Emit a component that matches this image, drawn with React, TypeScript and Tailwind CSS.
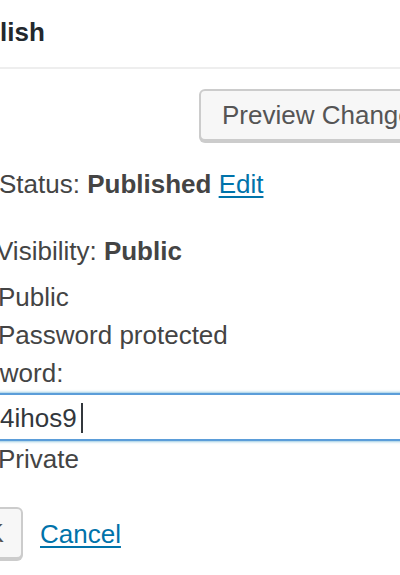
export default function App() {
  return (
    <div
      className="relative w-[400px] h-[575px] overflow-hidden bg-white text-[#444] text-[26px]"
      style={{ fontFamily: '"Liberation Sans", Arial, sans-serif' }}
    >
      {/* header */}
      <div className="h-[69px] border-b-2 border-[#eeeeee] ml-[-49px] pt-[18px]">
        <h2 className="text-[26px] leading-[28px] font-bold text-[#23282d] whitespace-nowrap">Publish</h2>
      </div>

      {/* preview button */}
      <div className="flex pt-[20px] pl-[199px] h-[76px]">
        <button className="h-[52px] w-[260px] shrink-0 rounded-[6px] border-2 border-[#cccccc] bg-[#f7f7f7] shadow-[0_2px_0_#cccccc] text-left pl-[21px] pt-[1px] text-[#555] text-[26px] whitespace-nowrap">
          Preview Changes
        </button>
      </div>

      {/* status */}
      <div className="mt-[24px] leading-[30px] whitespace-nowrap ml-[-1px]">
        Status: <b className="text-[#444]">Published</b>{" "}
        <a href="#" className="text-[#0073aa] underline underline-offset-[3px]">Edit</a>
      </div>

      {/* visibility */}
      <div className="mt-[37px] leading-[30px] whitespace-nowrap ml-[-4px]">
        Visibility: <b>Public</b>
      </div>

      <div className="mt-[12px] leading-[38px] whitespace-nowrap">
        <div className="flex items-center ml-[-34px] gap-[8px]">
          <span className="w-[24px] h-[24px] rounded-full border-2 border-[#b4b9be] shrink-0" />
          <span>Public</span>
        </div>
        <div className="flex items-center ml-[-34px] gap-[8px]">
          <span className="w-[24px] h-[24px] rounded-full border-2 border-[#b4b9be] shrink-0" />
          <span>Password protected</span>
        </div>
        <div className="ml-[-58px]">Password:</div>
      </div>

      {/* password input */}
      <div className="mt-[1px] ml-[-40px] w-[480px] h-[48px] border-2 border-[#5b9dd9] shadow-[0_0_3px_rgba(30,140,190,0.8)] bg-white flex items-center pl-[38px]">
        <span className="text-[#32373c] leading-[30px] pt-[2px]">4ihos9</span>
        <span className="w-[2px] h-[30px] bg-[#32373c] ml-[4px] mt-[2px]" />
      </div>

      <div className="mt-[1px] ml-[-34px] flex items-center gap-[8px] leading-[34px] whitespace-nowrap">
        <span className="w-[24px] h-[24px] rounded-full border-2 border-[#b4b9be] shrink-0" />
        <span>Private</span>
      </div>

      {/* ok / cancel */}
      <div className="mt-[31px] flex items-center">
        <button className="ml-[-57px] w-[80px] h-[52px] shrink-0 rounded-[6px] border-2 border-[#cccccc] bg-[#f7f7f7] shadow-[0_2px_0_#cccccc] text-[#555] text-[26px] pl-[4px]">
          OK
        </button>
        <a href="#" className="ml-[17px] text-[#0073aa] underline underline-offset-[3px] leading-[30px] mt-[2px]">
          Cancel
        </a>
      </div>
    </div>
  );
}
